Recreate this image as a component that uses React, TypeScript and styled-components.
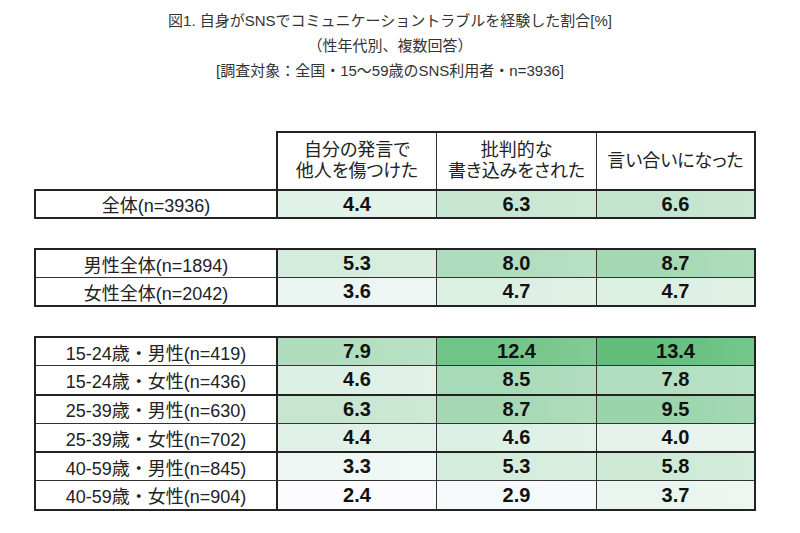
import React from "react";
import styled, { createGlobalStyle, css } from "styled-components";

const Global = createGlobalStyle`
  html, body { margin: 0; padding: 0; background: #ffffff; }
  body { font-family: "Liberation Sans", "Noto Sans CJK JP", sans-serif; }
`;

const Page = styled.div`
  width: 800px;
  height: 533px;
  padding: 8px 0 0 34px;
  box-sizing: border-box;
  background: #fff;
`;

const Title = styled.div`
  width: 722px;
  padding-right: 10px;
  box-sizing: border-box;
  text-align: center;
  color: #333;
  font-size: 15px;
  line-height: 25px;
`;

const HeaderRow = styled.div`
  margin-top: 48px;
  display: grid;
  grid-template-columns: 242px 480px;
`;

const HeaderBox = styled.div`
  display: grid;
  grid-template-columns: 158px 160px 158px;
  border: 2px solid #222;
  border-bottom: none;
  height: 58px;
  box-sizing: border-box;
`;

const HeaderCell = styled.div<{ $first?: boolean }>`
  display: flex;
  align-items: center;
  justify-content: center;
  text-align: center;
  font-size: 18px;
  line-height: 21px;
  font-feature-settings: "palt";
  color: #222;
  ${(p) => !p.$first && css`border-left: 1px solid #333;`}
`;

const Group = styled.div<{ $gap: number }>`
  margin-top: ${(p) => p.$gap}px;
  width: 722px;
  border: 2px solid #222;
  box-sizing: border-box;
`;

type Sep = "none" | "thin" | "thick";

const Row = styled.div<{ $sep: Sep; $h: number }>`
  display: grid;
  grid-template-columns: 240px 160px 160px 158px;
  height: ${(p) => p.$h}px;
  box-sizing: content-box;
  ${(p) =>
    p.$sep === "thin"
      ? css`border-top: 1px solid #333;`
      : p.$sep === "thick"
      ? css`border-top: 2px solid #222;`
      : ""}
`;

const Label = styled.div`
  display: flex;
  align-items: center;
  justify-content: center;
  font-size: 18px;
  color: #222;
  white-space: nowrap;
`;

const Value = styled.div<{ $first?: boolean }>`
  display: flex;
  align-items: center;
  justify-content: center;
  font-size: 20px;
  font-weight: 700;
  color: #111;
  box-sizing: border-box;
  border-left: ${(p) => (p.$first ? "2px solid #222" : "1px solid #333")};
`;

const MIN = 2.4;
const MAX = 13.4;
const LOW = [252, 252, 255];
const HIGH = [99, 190, 123];

function scale(v: number) {
  const t = Math.max(0, Math.min(1, (v - MIN) / (MAX - MIN)));
  const c = LOW.map((lo, i) => Math.round(lo + (HIGH[i] - lo) * t));
  const l = c.map((x) => Math.round(x + (255 - x) * 0.12));
  return `linear-gradient(90deg, rgb(${c.join(",")}) 0%, rgb(${c.join(",")}) 35%, rgb(${l.join(",")}) 100%)`;
}

type RowData = { label: string; v: number[]; sep: Sep };

const groupA: RowData[] = [{ label: "全体(n=3936)", v: [4.4, 6.3, 6.6], sep: "none" }];
const groupB: RowData[] = [
  { label: "男性全体(n=1894)", v: [5.3, 8.0, 8.7], sep: "none" },
  { label: "女性全体(n=2042)", v: [3.6, 4.7, 4.7], sep: "thin" },
];
const groupC: RowData[] = [
  { label: "15-24歳・男性(n=419)", v: [7.9, 12.4, 13.4], sep: "none" },
  { label: "15-24歳・女性(n=436)", v: [4.6, 8.5, 7.8], sep: "thin" },
  { label: "25-39歳・男性(n=630)", v: [6.3, 8.7, 9.5], sep: "thick" },
  { label: "25-39歳・女性(n=702)", v: [4.4, 4.6, 4.0], sep: "thin" },
  { label: "40-59歳・男性(n=845)", v: [3.3, 5.3, 5.8], sep: "thick" },
  { label: "40-59歳・女性(n=904)", v: [2.4, 2.9, 3.7], sep: "thin" },
];

function Rows({ rows, h }: { rows: RowData[]; h: number }) {
  return (
    <>
      {rows.map((r) => (
        <Row key={r.label} $sep={r.sep} $h={h}>
          <Label>{r.label}</Label>
          {r.v.map((x, i) => (
            <Value key={i} $first={i === 0} style={{ background: scale(x) }}>
              {x.toFixed(1)}
            </Value>
          ))}
        </Row>
      ))}
    </>
  );
}

export default function App() {
  return (
    <Page>
      <Global />
      <Title>
        <div>図1. 自身がSNSでコミュニケーショントラブルを経験した割合[%]</div>
        <div>（性年代別、複数回答）</div>
        <div>[調査対象：全国・15～59歳のSNS利用者・n=3936]</div>
      </Title>
      <HeaderRow>
        <div />
        <HeaderBox>
          <HeaderCell $first>
            自分の発言で
            <br />
            他人を傷つけた
          </HeaderCell>
          <HeaderCell>
            批判的な
            <br />
            書き込みをされた
          </HeaderCell>
          <HeaderCell>言い合いになった</HeaderCell>
        </HeaderBox>
      </HeaderRow>
      <Group $gap={0}>
        <Rows rows={groupA} h={26} />
      </Group>
      <Group $gap={29}>
        <Rows rows={groupB} h={27} />
      </Group>
      <Group $gap={29}>
        <Rows rows={groupC} h={27.3} />
      </Group>
    </Page>
  );
}
